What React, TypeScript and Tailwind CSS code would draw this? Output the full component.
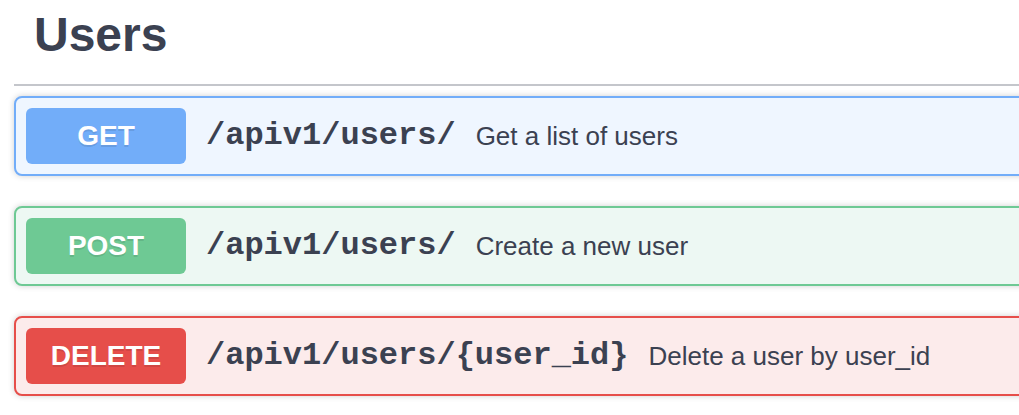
import React from 'react';

type Op = {
  method: string;
  path: string;
  summary: string;
  box: string;
  badge: string;
};

const ops: Op[] = [
  {
    method: 'GET',
    path: '/apiv1/users/',
    summary: 'Get a list of users',
    box: 'border-[#72adf9] bg-[#eff6ff]',
    badge: 'bg-[#72adf9]',
  },
  {
    method: 'POST',
    path: '/apiv1/users/',
    summary: 'Create a new user',
    box: 'border-[#6ec994] bg-[#edf8f3]',
    badge: 'bg-[#6ec994]',
  },
  {
    method: 'DELETE',
    path: '/apiv1/users/{user_id}',
    summary: 'Delete a user by user_id',
    box: 'border-[#e64e4a] bg-[#fcebeb]',
    badge: 'bg-[#e64e4a]',
  },
];

const OpBlock: React.FC<{ op: Op }> = ({ op }) => (
  <div
    className={`mb-[30px] h-[80px] flex items-center p-[10px] border-2 rounded-[8px] shadow-[0_0_6px_rgba(0,0,0,0.19)] ${op.box}`}
  >
    <div
      className={`w-[160px] h-[56px] shrink-0 rounded-[6px] flex items-center justify-center text-white font-bold text-[28px] [text-shadow:0_2px_0_rgba(0,0,0,0.1)] ${op.badge}`}
    >
      {op.method}
    </div>
    <span className="px-[20px] text-[32px] font-bold text-[#3b4151] whitespace-nowrap font-['Liberation_Mono','Courier_New',monospace]">
      {op.path}
    </span>
    <span className="text-[26px] text-[#3b4151] whitespace-nowrap">{op.summary}</span>
  </div>
);

export default function App() {
  return (
    <div className="w-[1019px] h-[415px] overflow-hidden bg-white font-['Liberation_Sans',Arial,sans-serif]">
      <div className="ml-[14px] w-[1040px]">
        <h3 className="h-[86px] pt-[11px] pl-[20px] mb-[10px] border-b-2 border-[#c4c6cb] text-[48px] leading-[48px] font-bold text-[#3b4151]">
          Users
        </h3>
        {ops.map((op) => (
          <OpBlock key={op.method} op={op} />
        ))}
      </div>
    </div>
  );
}
